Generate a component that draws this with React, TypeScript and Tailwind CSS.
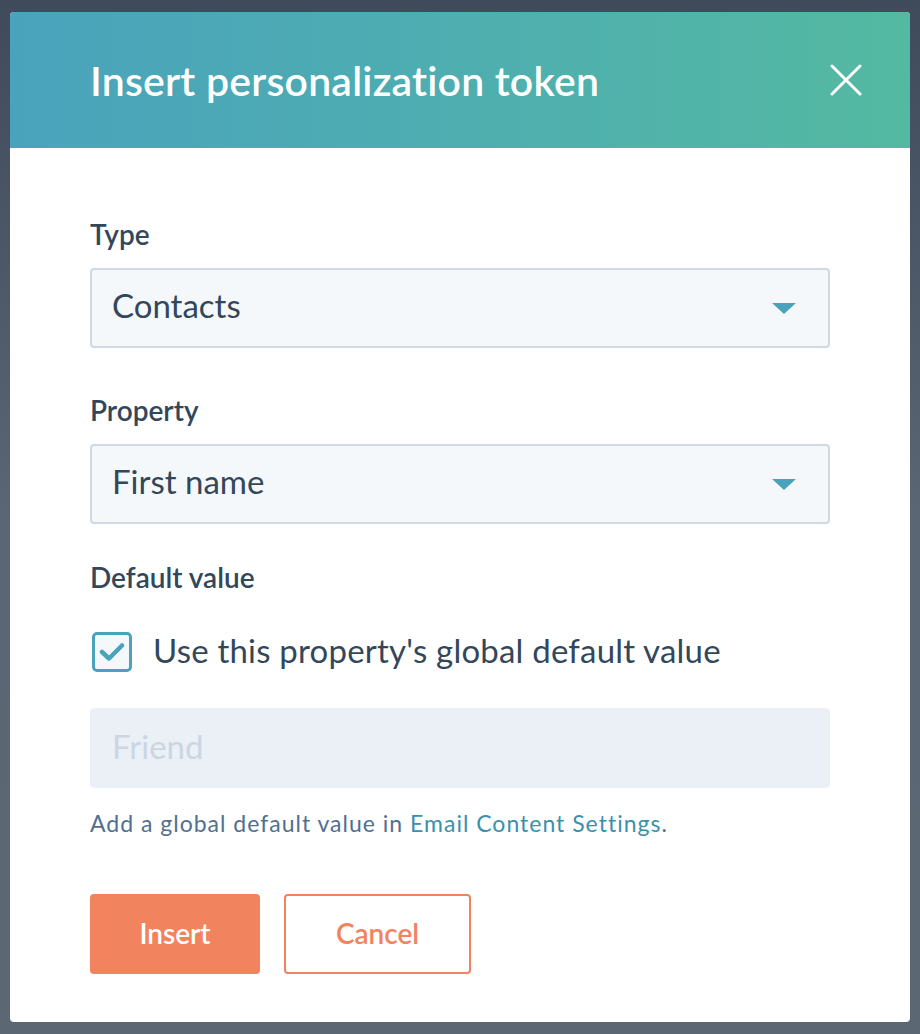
import React from 'react';

const font = { fontFamily: 'Lato, "Open Sans", sans-serif' };

const Caret: React.FC = () => (
  <svg width="24" height="11" viewBox="0 0 24 11" className="shrink-0">
    <path d="M0 0 L24 0 L12 11 Z" fill="#4aa3bd" />
  </svg>
);

interface SelectProps {
  value: string;
}

const SelectBox: React.FC<SelectProps> = ({ value }) => (
  <div className="flex h-[80px] items-center justify-between rounded-[4px] border-2 border-[#cfd9e4] bg-[#f5f8fa] pl-[20px] pr-[32px]">
    <span className="pb-[5px] text-[33px] leading-none text-[#33475b]">{value}</span>
    <Caret />
  </div>
);

const App: React.FC = () => {
  return (
    <div
      className="h-[1034px] w-full overflow-hidden bg-gradient-to-b from-[#3f4a5b] via-[#5a6673] to-[#5b6773] pt-[12px] px-[10px]"
      style={font}
    >
      <div className="flex h-[1010px] flex-col overflow-hidden rounded-[4px] bg-white">
        <div className="flex h-[136px] shrink-0 items-center justify-between bg-gradient-to-r from-[#4aa3bc] via-[#4eaeb0] to-[#54b9a1] pl-[80px] pr-[48px]">
          <h1 className="text-[41px] font-semibold leading-none tracking-[0.2px] text-white">
            Insert personalization token
          </h1>
          <button className="flex h-[32px] w-[32px] items-center justify-center">
            <svg width="32" height="32" viewBox="0 0 32 32">
              <path d="M2 2 L30 30 M30 2 L2 30" stroke="white" strokeWidth="3" strokeLinecap="round" />
            </svg>
          </button>
        </div>

        <div className="flex flex-col px-[80px] pt-[70px] text-[#33475b]">
          <label className="text-[28px] font-semibold leading-[32px]">Type</label>
          <div className="mt-[18px]">
            <SelectBox value="Contacts" />
          </div>

          <label className="mt-[46px] text-[28px] font-semibold leading-[32px]">Property</label>
          <div className="mt-[18px]">
            <SelectBox value="First name" />
          </div>

          <label className="mt-[37px] text-[28px] font-semibold leading-[32px]">Default value</label>

          <div className="mt-[39px] flex items-center gap-[21px] pl-[2px]">
            <div className="flex h-[40px] w-[40px] shrink-0 items-center justify-center rounded-[5px] border-[3px] border-[#4aa3bd] bg-[#f5f8fa]">
              <svg width="26" height="20" viewBox="0 0 26 20">
                <path d="M3 10 L10 16.5 L23 3.5" fill="none" stroke="#4aa3bd" strokeWidth="4.5" strokeLinecap="round" strokeLinejoin="round" />
              </svg>
            </div>
            <span className="pb-[3px] text-[33px] leading-none tracking-[0.2px]">Use this property's global default value</span>
          </div>

          <div className="mt-[36px] flex h-[80px] items-center rounded-[4px] bg-[#eaf0f6] pl-[22px]">
            <span className="pb-[3px] text-[33px] leading-none text-[#cbd6e2]">Friend</span>
          </div>

          <p className="mt-[21px] text-[23px] leading-[28px] tracking-[1px] text-[#516f90]">
            Add a global default value in{' '}
            <a className="text-[#3b90ab]">Email Content Settings</a>.
          </p>

          <div className="mt-[57px] flex gap-[24px]">
            <button className="flex h-[80px] w-[170px] items-center justify-center rounded-[4px] bg-[#f1835f] pb-[3px] text-[28px] font-semibold text-white">
              Insert
            </button>
            <button className="flex h-[80px] w-[187px] items-center justify-center rounded-[4px] border-2 border-[#f1835f] bg-white pb-[3px] text-[28px] font-semibold text-[#f1835f]">
              Cancel
            </button>
          </div>
        </div>
      </div>
    </div>
  );
};

export default App;
